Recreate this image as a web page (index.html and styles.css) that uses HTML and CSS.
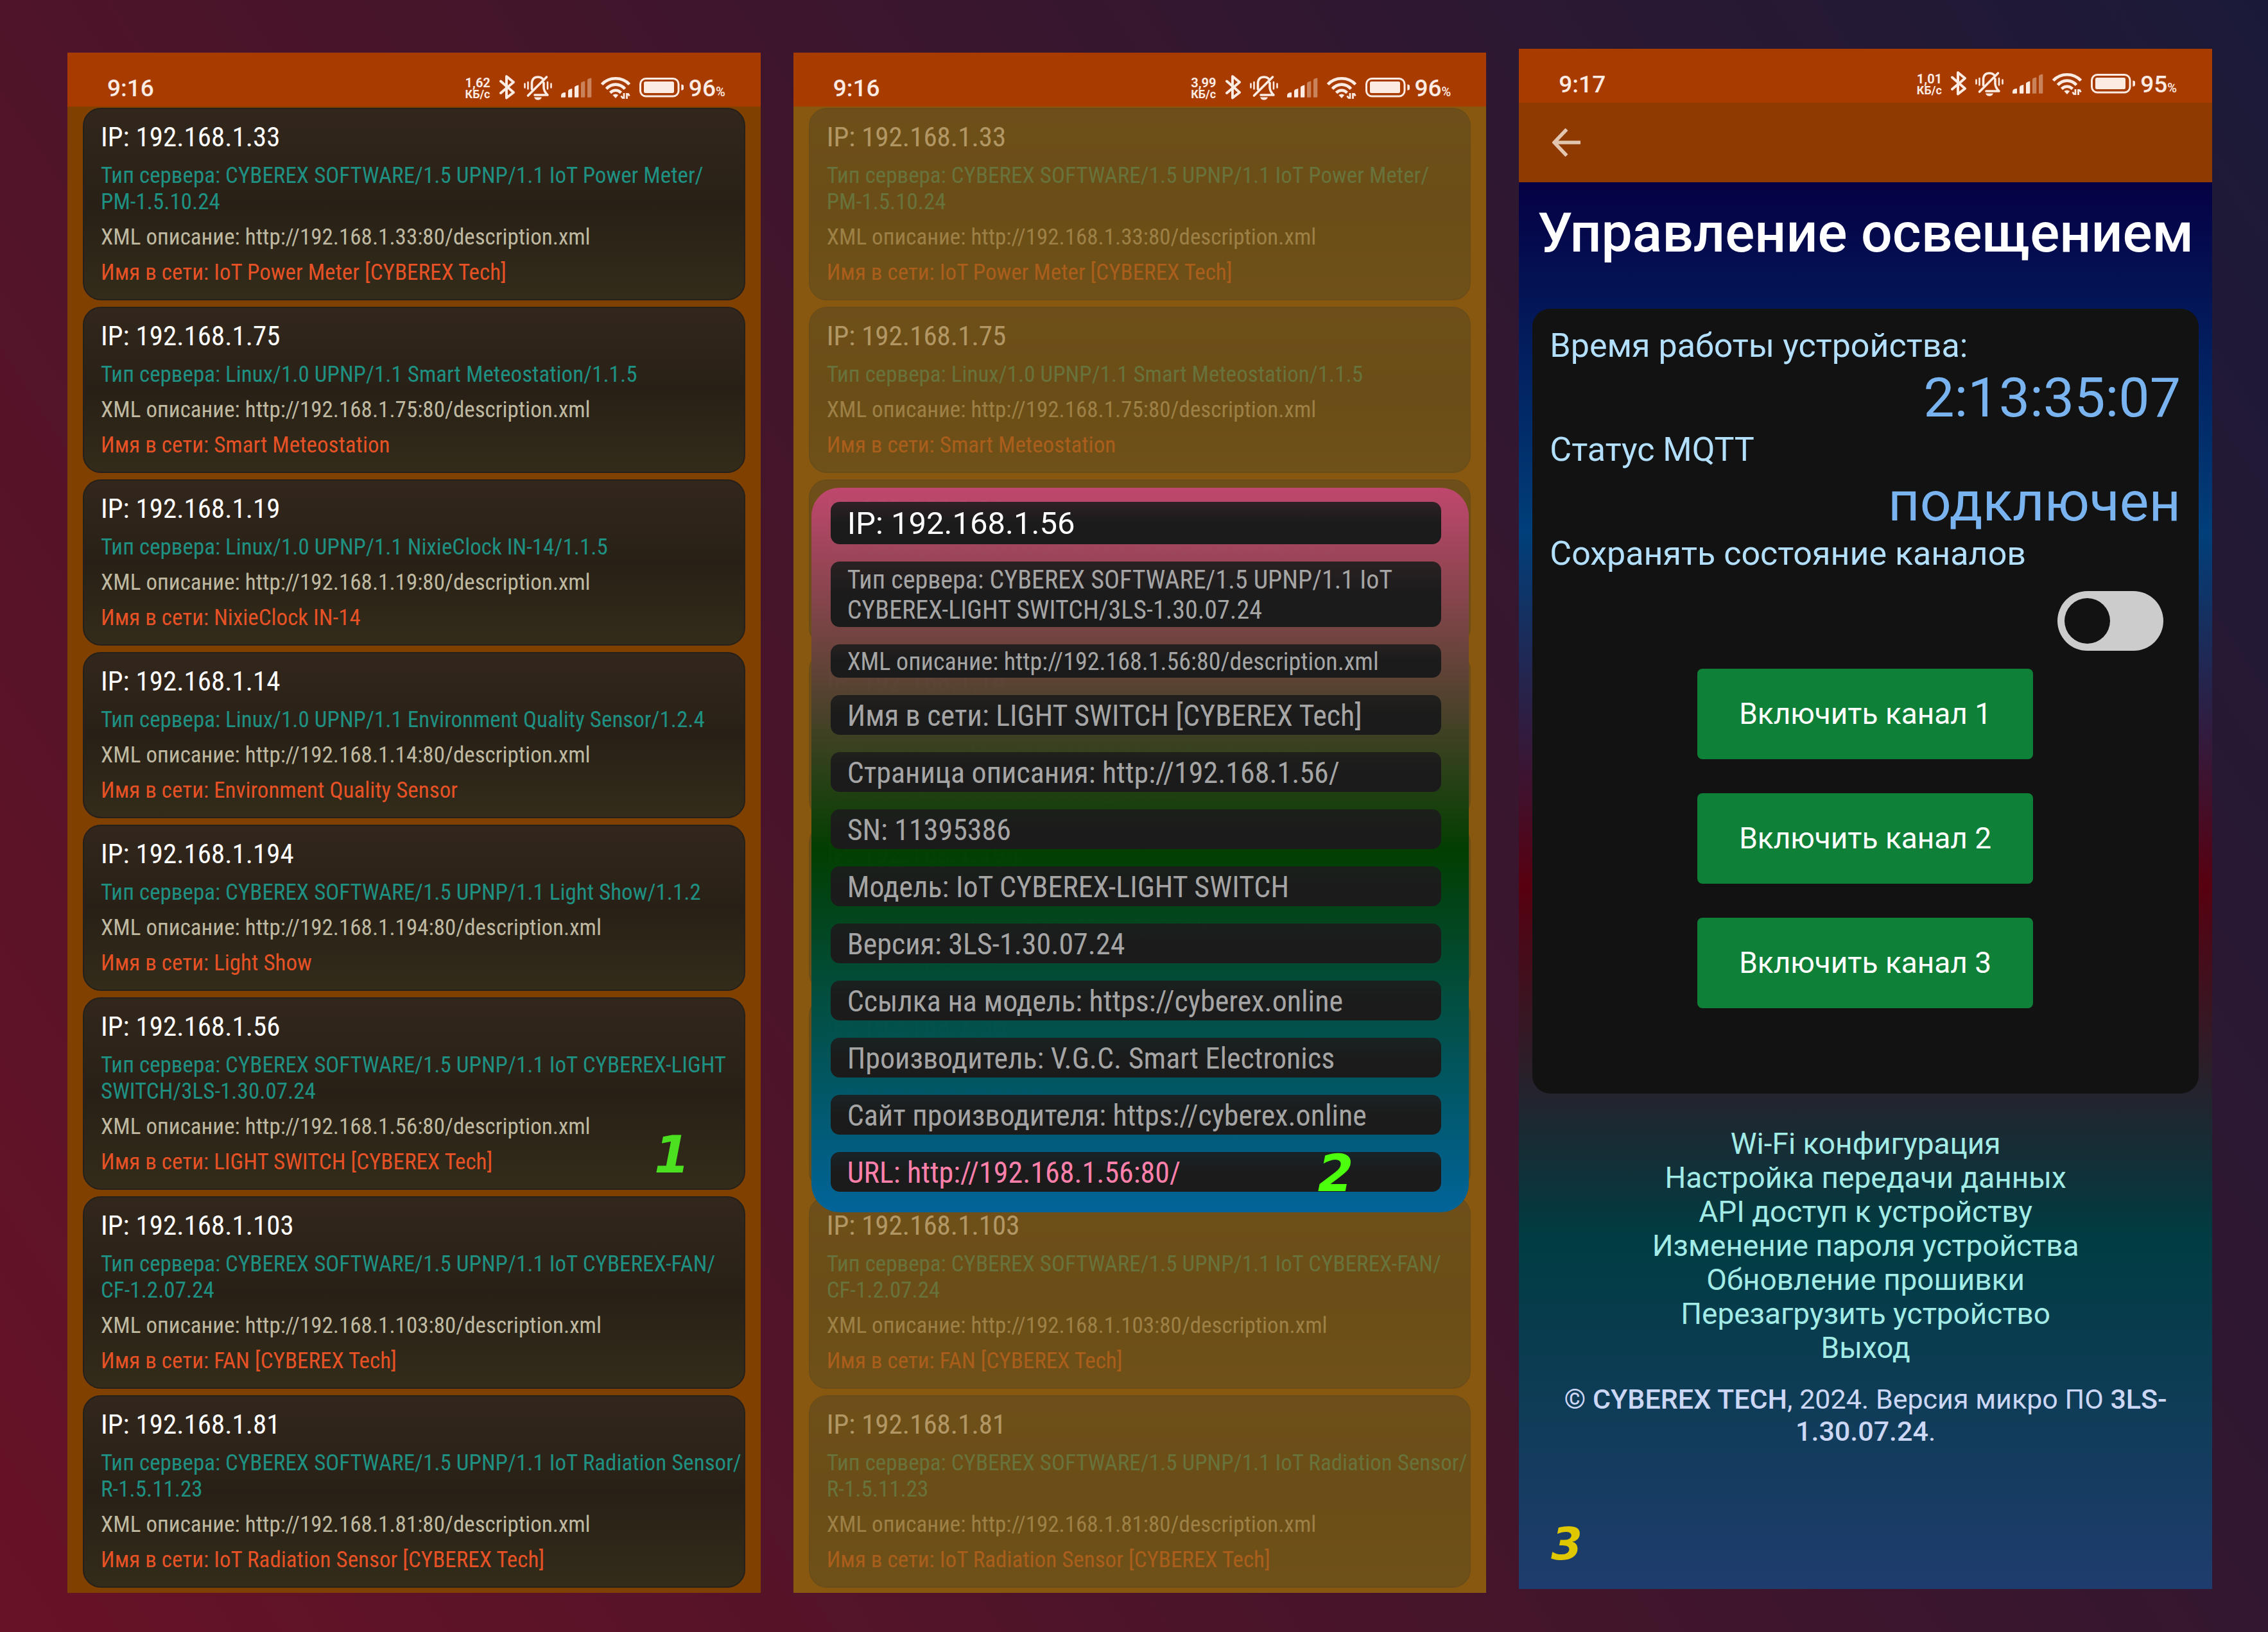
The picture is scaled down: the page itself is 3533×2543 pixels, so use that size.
FILE: index.html
```
<!DOCTYPE html>
<html lang="ru">
<head>
<meta charset="utf-8">
<title>CYBEREX IoT</title>
<link rel="stylesheet" href="styles.css">
</head>
<body>
<svg class="sprite" aria-hidden="true">
  <symbol id="bluetooth" viewBox="0 0 24 44"><path d="M2 10.500 22 28 11 36.500V3L22 12 2 29" fill="none" stroke="currentColor" stroke-width="4" stroke-linejoin="round" stroke-linecap="round"/></symbol>
  <symbol id="bell" viewBox="0 0 44 44">
    <g fill="none" stroke="currentColor" stroke-linecap="round" stroke-linejoin="round">
      <path d="M1.500 14.500V20.500M42.500 14.500V20.500M6.500 12V22.500M37 12V22.500" stroke-width="2.600"/>
      <path d="M12.500 23V14.500Q12.500 4 22 4Q26.500 4 29 6.500M31 13V20Q31 26 37 32H17M35.500 4 6.500 33" stroke-width="3.600"/>
    </g>
    <path d="M16 35.500H28Q26.500 39.700 22 39.700T16 35.500Z" fill="currentColor"/>
  </symbol>
  <symbol id="signal" viewBox="0 0 48 44">
    <g fill="currentColor">
      <path d="M0 35.700V33Q0 28 7 28V34.700Q7 35.700 6 35.700ZM11 35.700V26Q11 23 17.300 22V34.700Q17.300 35.700 16.300 35.700ZM21 35.700V20Q21 18 27.300 16.500V34.700Q27.300 35.700 26.300 35.700Z"/>
      <path opacity=".4" d="M31 35.700V14Q31 11 37.300 10.500V34.700Q37.300 35.700 36.300 35.700ZM41 35.700V9Q41 6 47.300 5.500V34.700Q47.300 35.700 46.300 35.700Z"/>
    </g>
  </symbol>
  <symbol id="wifi" viewBox="0 0 46 44">
    <g fill="none" stroke="currentColor" stroke-width="4.600">
      <path d="M1.500 15.500Q10 6.200 23 6.200T44.500 15.500M8.500 22.500Q14.500 15.600 23 15.600T37.500 22.500M14.500 28.500Q18.500 24.700 23 24.700T31.500 28.500"/>
    </g>
    <path d="M18.300 32Q23 28.800 27.300 32L23 37Z" fill="currentColor"/>
    <path d="M36 29V38M34.500 37.500 31.500 33.500M40.500 38V29M42 29.500 44.500 33.500" fill="none" stroke="currentColor" stroke-width="2.800"/>
  </symbol>
  <symbol id="battery" viewBox="0 0 69 44">
    <rect x="1.500" y="6.500" width="59.500" height="27.500" rx="8.500" fill="none" stroke="currentColor" stroke-width="3"/>
    <rect x="7" y="11" width="47" height="18" rx="2.500" fill="currentColor"/>
    <path d="M65.300 15.500Q69 15.500 69 18V22Q69 24.700 65.300 24.700Z" fill="currentColor"/>
  </symbol>
</svg>

<main class="board">
  <section class="phone phone-list">
    <header class="status">
      <time class="clock">9:16</time>
      <div class="tray">
        <p class="speed"><span>1,62</span><span>КБ/с</span></p>
        <svg class="icon w-bt"><use href="#bluetooth"/></svg>
        <svg class="icon w-bell"><use href="#bell"/></svg>
        <svg class="icon w-signal"><use href="#signal"/></svg>
        <svg class="icon w-wifi"><use href="#wifi"/></svg>
        <div class="charge"><svg class="icon w-battery"><use href="#battery"/></svg><p class="level">96<small>%</small></p></div>
      </div>
    </header>
    <ul class="devices">
      <li class="device"><h2>IP: 192.168.1.33</h2><p class="server">Тип сервера: CYBEREX SOFTWARE/1.5 UPNP/1.1 IoT Power Meter/<br>PM-1.5.10.24</p><p class="xml">XML описание: http://192.168.1.33:80/description.xml</p><p class="name">Имя в сети: IoT Power Meter [CYBEREX Tech]</p></li>
      <li class="device"><h2>IP: 192.168.1.75</h2><p class="server">Тип сервера: Linux/1.0 UPNP/1.1 Smart Meteostation/1.1.5</p><p class="xml">XML описание: http://192.168.1.75:80/description.xml</p><p class="name">Имя в сети: Smart Meteostation</p></li>
      <li class="device"><h2>IP: 192.168.1.19</h2><p class="server">Тип сервера: Linux/1.0 UPNP/1.1 NixieClock IN-14/1.1.5</p><p class="xml">XML описание: http://192.168.1.19:80/description.xml</p><p class="name">Имя в сети: NixieClock IN-14</p></li>
      <li class="device"><h2>IP: 192.168.1.14</h2><p class="server">Тип сервера: Linux/1.0 UPNP/1.1 Environment Quality Sensor/1.2.4</p><p class="xml">XML описание: http://192.168.1.14:80/description.xml</p><p class="name">Имя в сети: Environment Quality Sensor</p></li>
      <li class="device"><h2>IP: 192.168.1.194</h2><p class="server">Тип сервера: CYBEREX SOFTWARE/1.5 UPNP/1.1 Light Show/1.1.2</p><p class="xml">XML описание: http://192.168.1.194:80/description.xml</p><p class="name">Имя в сети: Light Show</p></li>
      <li class="device"><h2>IP: 192.168.1.56</h2><p class="server">Тип сервера: CYBEREX SOFTWARE/1.5 UPNP/1.1 IoT CYBEREX-LIGHT SWITCH/3LS-1.30.07.24</p><p class="xml">XML описание: http://192.168.1.56:80/description.xml</p><p class="name">Имя в сети: LIGHT SWITCH [CYBEREX Tech]</p><span class="mark mark-1">1</span></li>
      <li class="device"><h2>IP: 192.168.1.103</h2><p class="server">Тип сервера: CYBEREX SOFTWARE/1.5 UPNP/1.1 IoT CYBEREX-FAN/<br>CF-1.2.07.24</p><p class="xml">XML описание: http://192.168.1.103:80/description.xml</p><p class="name">Имя в сети: FAN [CYBEREX Tech]</p></li>
      <li class="device"><h2>IP: 192.168.1.81</h2><p class="server">Тип сервера: CYBEREX SOFTWARE/1.5 UPNP/1.1 IoT Radiation Sensor/<br>R-1.5.11.23</p><p class="xml">XML описание: http://192.168.1.81:80/description.xml</p><p class="name">Имя в сети: IoT Radiation Sensor [CYBEREX Tech]</p></li>
    </ul>
  </section>

  <section class="phone phone-list">
    <header class="status">
      <time class="clock">9:16</time>
      <div class="tray">
        <p class="speed"><span>3,99</span><span>КБ/с</span></p>
        <svg class="icon w-bt"><use href="#bluetooth"/></svg>
        <svg class="icon w-bell"><use href="#bell"/></svg>
        <svg class="icon w-signal"><use href="#signal"/></svg>
        <svg class="icon w-wifi"><use href="#wifi"/></svg>
        <div class="charge"><svg class="icon w-battery"><use href="#battery"/></svg><p class="level">96<small>%</small></p></div>
      </div>
    </header>
    <ul class="devices dimmed">
      <li class="device"><h2>IP: 192.168.1.33</h2><p class="server">Тип сервера: CYBEREX SOFTWARE/1.5 UPNP/1.1 IoT Power Meter/<br>PM-1.5.10.24</p><p class="xml">XML описание: http://192.168.1.33:80/description.xml</p><p class="name">Имя в сети: IoT Power Meter [CYBEREX Tech]</p></li>
      <li class="device"><h2>IP: 192.168.1.75</h2><p class="server">Тип сервера: Linux/1.0 UPNP/1.1 Smart Meteostation/1.1.5</p><p class="xml">XML описание: http://192.168.1.75:80/description.xml</p><p class="name">Имя в сети: Smart Meteostation</p></li>
      <li class="device"><h2>IP: 192.168.1.19</h2><p class="server">Тип сервера: Linux/1.0 UPNP/1.1 NixieClock IN-14/1.1.5</p><p class="xml">XML описание: http://192.168.1.19:80/description.xml</p><p class="name">Имя в сети: NixieClock IN-14</p></li>
      <li class="device"><h2>IP: 192.168.1.14</h2><p class="server">Тип сервера: Linux/1.0 UPNP/1.1 Environment Quality Sensor/1.2.4</p><p class="xml">XML описание: http://192.168.1.14:80/description.xml</p><p class="name">Имя в сети: Environment Quality Sensor</p></li>
      <li class="device"><h2>IP: 192.168.1.194</h2><p class="server">Тип сервера: CYBEREX SOFTWARE/1.5 UPNP/1.1 Light Show/1.1.2</p><p class="xml">XML описание: http://192.168.1.194:80/description.xml</p><p class="name">Имя в сети: Light Show</p></li>
      <li class="device"><h2>IP: 192.168.1.56</h2><p class="server">Тип сервера: CYBEREX SOFTWARE/1.5 UPNP/1.1 IoT CYBEREX-LIGHT SWITCH/3LS-1.30.07.24</p><p class="xml">XML описание: http://192.168.1.56:80/description.xml</p><p class="name">Имя в сети: LIGHT SWITCH [CYBEREX Tech]</p></li>
      <li class="device"><h2>IP: 192.168.1.103</h2><p class="server">Тип сервера: CYBEREX SOFTWARE/1.5 UPNP/1.1 IoT CYBEREX-FAN/<br>CF-1.2.07.24</p><p class="xml">XML описание: http://192.168.1.103:80/description.xml</p><p class="name">Имя в сети: FAN [CYBEREX Tech]</p></li>
      <li class="device"><h2>IP: 192.168.1.81</h2><p class="server">Тип сервера: CYBEREX SOFTWARE/1.5 UPNP/1.1 IoT Radiation Sensor/<br>R-1.5.11.23</p><p class="xml">XML описание: http://192.168.1.81:80/description.xml</p><p class="name">Имя в сети: IoT Radiation Sensor [CYBEREX Tech]</p></li>
    </ul>
    <div class="dialog" role="dialog" aria-label="IP: 192.168.1.56">
      <h2 class="row row-ip">IP: 192.168.1.56</h2>
      <p class="row row-server">Тип сервера: CYBEREX SOFTWARE/1.5 UPNP/1.1 IoT CYBEREX-LIGHT SWITCH/3LS-1.30.07.24</p>
      <p class="row row-xml">XML описание: http://192.168.1.56:80/description.xml</p>
      <p class="row">Имя в сети: LIGHT SWITCH [CYBEREX Tech]</p>
      <p class="row">Страница описания: http://192.168.1.56/</p>
      <p class="row">SN: 11395386</p>
      <p class="row">Модель: IoT CYBEREX-LIGHT SWITCH</p>
      <p class="row">Версия: 3LS-1.30.07.24</p>
      <p class="row">Ссылка на модель: https://cyberex.online</p>
      <p class="row">Производитель: V.G.C. Smart Electronics</p>
      <p class="row">Сайт производителя: https://cyberex.online</p>
      <a class="row row-url" href="#">URL: http://192.168.1.56:80/</a>
      <span class="mark mark-2">2</span>
    </div>
  </section>

  <section class="phone">
    <header class="status">
      <time class="clock">9:17</time>
      <div class="tray">
        <p class="speed"><span>1,01</span><span>КБ/с</span></p>
        <svg class="icon w-bt"><use href="#bluetooth"/></svg>
        <svg class="icon w-bell"><use href="#bell"/></svg>
        <svg class="icon w-signal"><use href="#signal"/></svg>
        <svg class="icon w-wifi"><use href="#wifi"/></svg>
        <div class="charge"><svg class="icon w-battery"><use href="#battery"/></svg><p class="level">95<small>%</small></p></div>
      </div>
    </header>
    <nav class="appbar">
      <button class="back" type="button" aria-label="Назад"><svg class="arrow" viewBox="0 0 44 44"><path d="M44 22H4M22.500 1.500 3 22 22.500 42.500" fill="none" stroke="currentColor" stroke-width="5.500"/></svg></button>
    </nav>
    <div class="control">
      <h1>Управление освещением</h1>
      <div class="panel">
        <p class="label">Время работы устройства:</p>
        <p class="value">2:13:35:07</p>
        <p class="label">Статус MQTT</p>
        <p class="value">подключен</p>
        <label class="label" for="keep">Сохранять состояние каналов</label>
        <input class="toggle" id="keep" type="checkbox" role="switch">
        <div class="channels">
          <button class="channel" type="button">Включить канал 1</button>
          <button class="channel" type="button">Включить канал 2</button>
          <button class="channel" type="button">Включить канал 3</button>
        </div>
      </div>
      <nav class="links">
        <a href="#">Wi-Fi конфигурация</a>
        <a href="#">Настройка передачи данных</a>
        <a href="#">API доступ к устройству</a>
        <a href="#">Изменение пароля устройства</a>
        <a href="#">Обновление прошивки</a>
        <a href="#">Перезагрузить устройство</a>
        <a href="#">Выход</a>
      </nav>
      <footer class="copy">© <b>CYBEREX TECH</b>, 2024. Версия микро ПО <b>3LS-<wbr>1.30.07.24</b>.</footer>
      <span class="mark mark-3">3</span>
    </div>
  </section>
</main>
</body>
</html>
```
FILE: styles.css
```
* {
  box-sizing: border-box;
  margin: 0;
  padding: 0;
}

body {
  min-height: 100vh;
  font-family: Roboto, "Noto Sans", sans-serif;
  color: #fff;
  background: linear-gradient(57deg, #681226 0%, #41152b 50%, #1a1a38 100%);
}

a {
  color: inherit;
  text-decoration: none;
}

button {
  font: inherit;
  color: inherit;
  border: 0;
  cursor: pointer;
}

.sprite {
  position: absolute;
  width: 0;
  height: 0;
}

.board {
  display: grid;
  grid-template-columns: repeat(3, 1fr);
  align-items: start;
  gap: 51px;
  padding: 76px 87px 60px 105px;
}

.phone {
  position: relative;
}

.phone-list {
  margin-top: 6px;
}

/* Status bar */

.status {
  display: flex;
  justify-content: space-between;
  align-items: center;
  padding: 34px 55px 6px 62px;
  color: #fcebe3;
  background: #a83c00;
}

.clock,
.level {
  font-size: 37px;
  font-weight: 500;
  line-height: 44px;
}

.level small {
  font-size: 20px;
  line-height: 20px;
}

.tray {
  display: flex;
  align-items: center;
  gap: 14px;
}

.charge {
  display: flex;
  align-items: center;
  gap: 8px;
}

.speed {
  display: flex;
  flex-direction: column;
  font-size: 20px;
  font-weight: 700;
  line-height: 18px;
}

.speed span + span {
  font-size: 18px;
}

.icon {
  display: block;
  height: 44px;
}

.w-bt { width: 24px; }
.w-bell { width: 44px; }
.w-signal { width: 48px; }
.w-wifi { width: 46px; }
.w-battery { width: 69px; }

/* Device list */

.devices {
  display: flex;
  flex-direction: column;
  gap: 10px;
  padding: 2px 24px 8px;
  list-style: none;
  font-family: "Roboto Condensed", Roboto, sans-serif;
  background: #804000;
}

.dimmed::after {
  content: "";
  position: absolute;
  inset: 84px 0 0;
  background: rgba(140, 100, 24, 0.67);
}

.device {
  position: relative;
  display: flex;
  flex-direction: column;
  gap: 14px;
  padding: 17px 0 21px 26px;
  font-size: 35px;
  line-height: 41px;
  border: 2px solid #25201a;
  border-radius: 28px;
  background: linear-gradient(#33271d, #282016 50%, #332c1a);
}

.device h2 {
  font-size: 43px;
  font-weight: 400;
  line-height: 52px;
}

.server { color: #1f9183; }
.xml { color: #bfb9a2; }
.name { color: #e65225; }

/* Device details */

.dialog {
  position: absolute;
  top: 678px;
  left: 28px;
  right: 27px;
  z-index: 1;
  display: flex;
  flex-direction: column;
  gap: 27px;
  padding: 22px 43px 32px 30px;
  font-family: "Roboto Condensed", Roboto, sans-serif;
  border-radius: 44px;
  background: linear-gradient(rgba(194, 71, 112, 0.97), rgba(0, 62, 0, 0.98) 50%, rgba(0, 100, 155, 0.99));
}

.row {
  padding: 5px 26px 3px;
  font-size: 46px;
  font-weight: 400;
  line-height: 54px;
  color: #a5a5a5;
  border-radius: 14px;
  background: linear-gradient(rgba(28, 28, 28, 0.88), #1b1b1b 50%);
}

.row-ip {
  font-family: Roboto, sans-serif;
  font-size: 49px;
  line-height: 58px;
  color: #fff;
}

.row-server {
  font-size: 40px;
  line-height: 47px;
}

.row-xml {
  font-size: 38px;
  line-height: 44px;
}

.row-url {
  color: #ff80ab;
}

/* Screen numbers */

.mark {
  position: absolute;
  font: italic 700 80px/80px "DejaVu Sans", sans-serif;
}

.mark-1 {
  right: 84px;
  bottom: 12px;
  color: #4be020;
}

.mark-2 {
  right: 180px;
  bottom: 20px;
  color: #4cff0c;
}

.mark-3 {
  left: 50px;
  bottom: 30px;
  font-size: 70px;
  color: #e0c800;
}

/* Light control */

.appbar {
  display: flex;
  align-items: center;
  padding: 40px 52px;
  background: #8f3a00;
}

.back {
  display: block;
  color: #e3c6b0;
  background: none;
}

.arrow {
  display: block;
  width: 44px;
  height: 44px;
}

.control {
  position: relative;
  padding: 28px 21px 221px;
  text-align: center;
  background: linear-gradient(#050044, #003f7a 25%, #580010 50%, #003c42 75%, #1f3c6e);
}

.control h1 {
  font-size: 86px;
  font-weight: 500;
  line-height: 101px;
  white-space: nowrap;
}

.panel {
  display: flex;
  flex-direction: column;
  align-items: flex-start;
  margin-top: 68px;
  padding: 27px 28px 133px 27px;
  border-radius: 28px;
  background: #121212;
}

.label {
  font-size: 52px;
  line-height: 61px;
  color: #b3e0ff;
}

.value {
  align-self: flex-end;
  font-size: 86px;
  line-height: 101px;
  color: #7ab4f0;
}

.toggle {
  appearance: none;
  display: flex;
  align-self: flex-end;
  width: 165px;
  height: 93px;
  margin: 28px 27px 28px 0;
  padding: 11px;
  border-radius: 47px;
  background: #ccc;
}

.toggle::before {
  content: "";
  width: 71px;
  height: 71px;
  border-radius: 50%;
  background: #121212;
}

.toggle:checked {
  justify-content: flex-end;
}

.channels {
  display: flex;
  flex-direction: column;
  align-self: center;
  gap: 53px;
}

.channel {
  min-width: 523px;
  padding: 43px 40px 44px;
  font-size: 46px;
  line-height: 54px;
  border-radius: 8px;
  background: #0f8038;
}

.links {
  display: flex;
  flex-direction: column;
  align-items: center;
  margin-top: 52px;
  font-size: 46px;
  line-height: 53px;
  color: #a3ebe6;
}

.copy {
  margin-top: 28px;
  padding: 0 40px;
  font-size: 43px;
  line-height: 50px;
  color: #ccd6f5;
}

.copy b {
  font-weight: 500;
}
```
